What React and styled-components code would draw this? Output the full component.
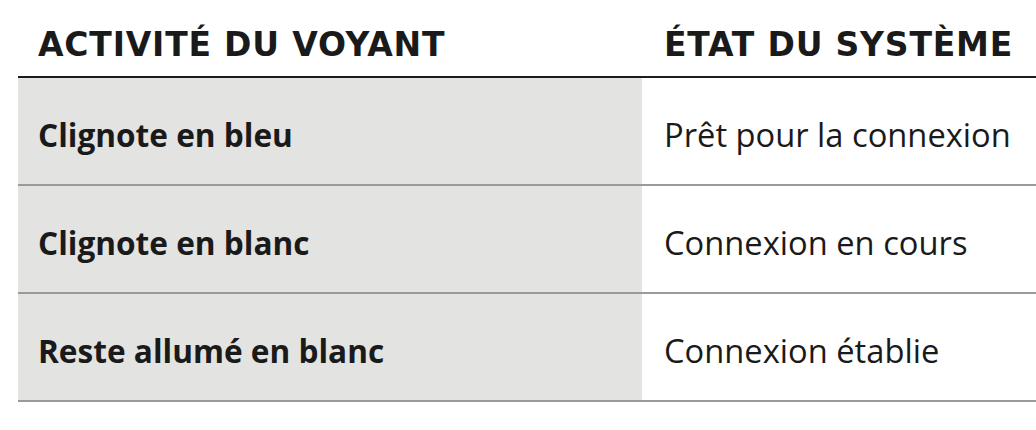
import styled, { createGlobalStyle } from "styled-components";

const GlobalStyle = createGlobalStyle`
  html, body {
    margin: 0;
    padding: 0;
    background: #ffffff;
  }
`;

const Page = styled.div`
  width: 1036px;
  height: 430px;
  padding-left: 18px;
  box-sizing: border-box;
  overflow: hidden;
  font-family: "Open Sans", "Liberation Sans", sans-serif;
  color: #1a1a1a;
`;

const Table = styled.div`
  display: grid;
  grid-template-columns: 624px 394px;
`;

const HeadCell = styled.div`
  height: 78px;
  box-sizing: border-box;
  display: flex;
  align-items: center;
  padding-left: ${(props) => (props.right ? "22px" : "20px")};
  padding-top: 12px;
  border-bottom: 2px solid #1c1c1c;
  font-family: "DejaVu Sans", "Open Sans", sans-serif;
  font-size: 33px;
  font-weight: 700;
  letter-spacing: 0.8px;
  text-transform: uppercase;
  white-space: nowrap;
`;

const Cell = styled.div`
  height: 108px;
  box-sizing: border-box;
  display: flex;
  align-items: center;
  padding-left: ${(props) => (props.right ? "22px" : "20px")};
  padding-top: 6px;
  border-bottom: 2px solid #9a9a9a;
  background: ${(props) => (props.right ? "#ffffff" : "#e3e3e2")};
  font-size: ${(props) => (props.right ? "32.7px" : "31.6px")};
  font-weight: ${(props) => (props.right ? 400 : 700)};
  white-space: nowrap;
`;

const rows = [
  ["Clignote en bleu", "Prêt pour la connexion"],
  ["Clignote en blanc", "Connexion en cours"],
  ["Reste allumé en blanc", "Connexion établie"],
];

const App = () => {
  return (
    <Page>
      <GlobalStyle />
      <Table>
        <HeadCell>Activité du voyant</HeadCell>
        <HeadCell right>État du système</HeadCell>
        {rows.map(([a, b]) => (
          <>
            <Cell key={a}>{a}</Cell>
            <Cell key={b} right>{b}</Cell>
          </>
        ))}
      </Table>
    </Page>
  );
};

export default App;
